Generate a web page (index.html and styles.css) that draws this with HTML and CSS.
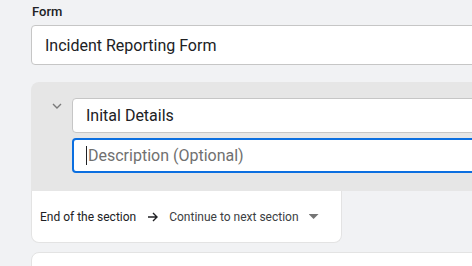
FILE: index.html
```html
<!DOCTYPE html>
<html lang="en">
<head>
  <meta charset="UTF-8" />
  <title>Form builder</title>
  <link rel="stylesheet" href="styles.css">
</head>
<body>

  <div class="page">
    <label class="field-label">Form</label>
    <div class="text-box form-title">Incident Reporting Form</div>

    <!-- Section card -->
    <div class="section-card">
      <div class="section-head">
        <div class="chevron">
          <svg width="10" height="6" viewBox="0 0 10 6"><polyline points="1,1 5,5 9,1" fill="none" stroke="#7a7a7a" stroke-width="1.4"/></svg>
        </div>
        <div class="section-fields">
          <div class="text-box small-box">Inital Details</div>
          <div class="text-box small-box focused"><span class="caret"></span><span class="placeholder">Description (Optional)</span></div>
        </div>
      </div>
      <div class="section-foot">
        <span>End of the section</span>
        <svg class="arrow" width="12" height="10" viewBox="0 0 12 10"><path d="M1 5h9M6 1l4 4-4 4" fill="none" stroke="#202124" stroke-width="1.4"/></svg>
        <span class="next">Continue to next section</span>
        <i class="drop"></i>
      </div>
    </div>

    <div class="next-card"></div>
  </div>

</body>
</html>
```

FILE: styles.css
```css
body {
  margin: 0;
  background-color: #f1f2f4;
  font-family: Roboto, "Noto Sans", Arial, sans-serif;
  color: #202124;
  overflow: hidden;
}

.page {
  width: 620px;
  padding: 4px 0 0 31px;
}

.field-label {
  display: block;
  font-size: 13px;
  font-weight: 500;
  line-height: 16px;
  margin-left: 1px;
  margin-bottom: 5px;
}

.text-box {
  background-color: #fff;
  border: 1px solid #c6c6c6;
  border-radius: 4px;
  box-sizing: border-box;
  display: flex;
  align-items: center;
  padding-left: 13px;
  font-size: 16px;
}

.form-title {
  height: 40px;
}

.section-card {
  margin-top: 17px;
}

.section-head {
  background-color: #e6e6e6;
  border-radius: 8px 0 0 0;
  display: flex;
  padding: 16px 0 18px 17px;
}

.chevron {
  width: 18px;
  margin-right: 6px;
  display: flex;
  justify-content: center;
  padding-top: 5px;
}

.section-fields {
  flex: 1;
  display: flex;
  flex-direction: column;
  gap: 5px;
}

.small-box {
  height: 35px;
}

.focused {
  border: 2px solid #0b6fe0;
  padding-left: 12px;
}

.caret {
  width: 1px;
  height: 19px;
  background-color: #202124;
  margin-right: 1px;
}

.placeholder {
  color: #707070;
}

.section-foot {
  width: 311px;
  height: 52px;
  box-sizing: border-box;
  background-color: #fff;
  border: 1px solid #e3e3e3;
  border-top: none;
  border-radius: 0 0 8px 8px;
  display: flex;
  align-items: center;
  padding-left: 8px;
  font-size: 12px;
}

.arrow {
  margin: 0 10px 0 11px;
}

.next {
  color: #3c4043;
}

.drop {
  width: 10px;
  height: 5px;
  background-color: #757575;
  clip-path: polygon(0 0, 100% 0, 50% 100%);
  margin-left: 10px;
}

.next-card {
  margin-top: 9px;
  height: 40px;
  background-color: #fff;
  border: 1px solid #e3e3e3;
  border-radius: 8px 0 0 0;
}
```
